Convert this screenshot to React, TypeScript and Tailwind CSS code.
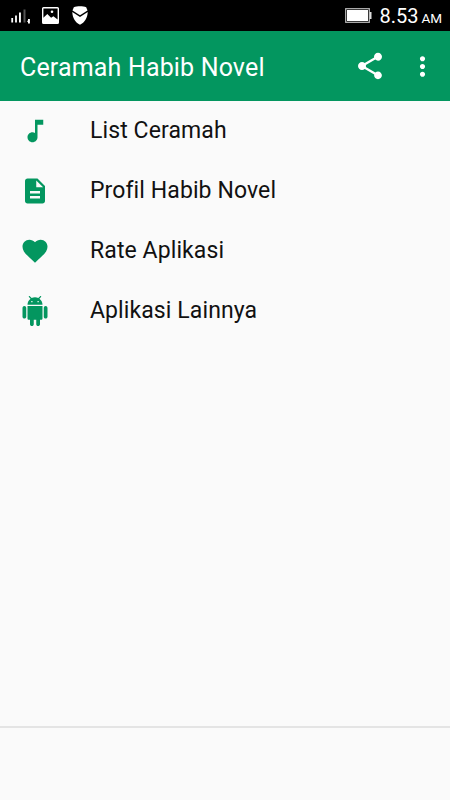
import React from 'react';

const menu = [
  {
    label: "List Ceramah",
    icon: "M12 3v10.55c-.59-.34-1.27-.55-2-.55-2.21 0-4 1.79-4 4s1.79 4 4 4 4-1.79 4-4V7h4.600V3H12z"
  },
  {
    label: "Profil Habib Novel",
    icon: "M14 2H6c-1.1 0-1.99.9-1.99 2L4 20c0 1.1.89 2 1.99 2H18c1.1 0 2-.9 2-2V8l-6-6zm2 16H8v-2h8v2zm0-4H8v-2h8v2zm-3-5V3.5L18.5 9H13z"
  },
  {
    label: "Rate Aplikasi",
    icon: "M12 21.35l-1.45-1.32C5.4 15.36 2 12.28 2 8.5 2 5.42 4.42 3 7.5 3c1.74 0 3.41.81 4.5 2.09C13.09 3.81 14.76 3 16.5 3 19.58 3 22 5.42 22 8.5c0 3.78-3.4 6.86-8.55 11.54L12 21.35z"
  },
  {
    label: "Aplikasi Lainnya",
    icon: "M6 18c0 .55.45 1 1 1h1v3.5c0 .83.67 1.5 1.5 1.5s1.5-.67 1.5-1.5V19h2v3.5c0 .83.67 1.5 1.5 1.5s1.5-.67 1.5-1.5V19h1c.55 0 1-.45 1-1V8H6v10zM3.5 8C2.67 8 2 8.67 2 9.5v7c0 .83.67 1.5 1.5 1.5S5 17.33 5 16.5v-7C5 8.67 4.33 8 3.5 8zm17 0c-.83 0-1.5.67-1.5 1.5v7c0 .83.67 1.5 1.5 1.5s1.5-.67 1.5-1.5v-7c0-.83-.67-1.5-1.5-1.5zm-4.97-5.84l1.3-1.3c.2-.2.2-.51 0-.71-.2-.2-.51-.2-.71 0l-1.48 1.48C13.85 1.23 12.95 1 12 1c-.96 0-1.86.23-2.66.63L7.85.15c-.2-.2-.51-.2-.71 0-.2.2-.2.51 0 .71l1.31 1.31C6.97 3.26 6 5.01 6 7h12c0-1.99-.97-3.75-2.47-4.84zM10 5H9V4h1v1zm5 0h-1V4h1v1z"
  }
];

const StatusBar = () => (
  <div className="flex h-[31px] items-center bg-black pl-[11px] pr-[8px] text-white">
    {/* Signal */}
    <svg className="h-5 w-5" viewBox="0 0 20 20">
      <path fill="#fff" d="M.3 12h1.800v4.500H.3zM4.100 9.500h1.800v7H4.100zM8 6.500h1.900v10H8z" />
      <path fill="#555" d="M12.500 3.500h2v13h-2z" />
      <path fill="#fff" d="M17 13h1.900v4.500H17v-1.400l-1.200-.8 1.200-.8z" />
    </svg>
    {/* Picture */}
    <svg className="ml-[11px] h-[17px] w-[17px]" viewBox="0 0 17 17" fill="#fff">
      <path fillRule="evenodd" d="M1.500 0h14A1.500 1.500 0 0 1 17 1.500v14a1.500 1.500 0 0 1-1.500 1.500h-14A1.500 1.500 0 0 1 0 15.500v-14A1.500 1.500 0 0 1 1.500 0zM1.400 1.400v9.400L5.300 6.900l3.800 3.800 2.300-1.500 4.200 3.300V1.400z" />
      <circle cx="10" cy="4.800" r="1.300" />
    </svg>
    {/* Shield */}
    <svg className="ml-[13px] h-[19px] w-4" viewBox="0 0 16 19" fill="#fff">
      <path d="M1.800 1.300C5-.1 11-.1 14.200 1.300L15.500 4.500 8 9.300.500 4.500z" />
      <path d="M.3 6 8 11l7.700-5c-.2 6-3 10.600-7.700 12.800C3.300 16.600.5 12 .3 6z" />
    </svg>
    {/* Battery */}
    <svg className="ml-auto h-[15px] w-[27px]" viewBox="0 0 27 15">
      <rect x=".7" y=".7" width="23.600" height="13.600" fill="none" stroke="#bbb" strokeWidth="1.200" />
      <rect x="2" y="2" width="21" height="11" fill="#fff" />
      <path fill="#ddd" d="M24.500 4h2v7h-2z" />
    </svg>
    <div className="ml-[7px] flex items-baseline pt-px leading-none">
      <span className="text-[20px]">8.53</span>
      <span className="ml-[3px] text-[13.500px]">AM</span>
    </div>
  </div>
);

const App = () => {
  return (
    <div className="flex h-[800px] w-[450px] flex-col overflow-hidden bg-[#fafafa] font-[Roboto,sans-serif]">
      <StatusBar />

      <header className="flex h-[70px] items-center bg-[#03965f] pl-5 text-white">
        <h1 className="pt-[4px] text-[25px] tracking-[0.16px]">Ceramah Habib Novel</h1>
        <svg className="ml-auto h-8 w-8" viewBox="0 0 24 24" fill="currentColor">
          <path d="M18 16.080c-.76 0-1.440.3-1.960.770L8.910 12.700c.05-.23.090-.46.090-.7s-.04-.47-.09-.7l7.050-4.110c.54.5 1.250.810 2.040.810 1.660 0 3-1.340 3-3s-1.340-3-3-3-3 1.340-3 3c0 .24.040.47.090.7L8.040 9.810C7.500 9.310 6.790 9 6 9c-1.660 0-3 1.340-3 3s1.340 3 3 3c.79 0 1.500-.31 2.040-.81l7.120 4.160c-.05.21-.08.43-.08.65 0 1.610 1.310 2.920 2.920 2.920s2.920-1.310 2.920-2.920-1.310-2.920-2.920-2.920z" />
        </svg>
        <svg className="ml-[21px] mr-[12px] h-[31px] w-[31px]" viewBox="0 0 24 24" fill="currentColor">
          <path d="M12 8c1.100 0 2-.9 2-2s-.9-2-2-2-2 .9-2 2 .9 2 2 2zm0 2c-1.100 0-2 .9-2 2s.9 2 2 2 2-.9 2-2-.9-2-2-2zm0 6c-1.100 0-2 .9-2 2s.9 2 2 2 2-.9 2-2-.9-2-2-2z" />
        </svg>
      </header>

      <main className="flex-1">
        {menu.map((item) => (
          <div key={item.label} className="flex h-[60px] items-center pl-5">
            <svg className="h-[30px] w-[30px] text-[#03965f]" viewBox="0 0 24 24" fill="currentColor">
              <path d={item.icon} />
            </svg>
            <span className="ml-10 text-[23px] tracking-[0.1px] text-[#111]">{item.label}</span>
          </div>
        ))}
      </main>

      <footer className="h-[74px] border-t-2 border-[#e4e4e4]"></footer>
    </div>
  );
};

export default App;
